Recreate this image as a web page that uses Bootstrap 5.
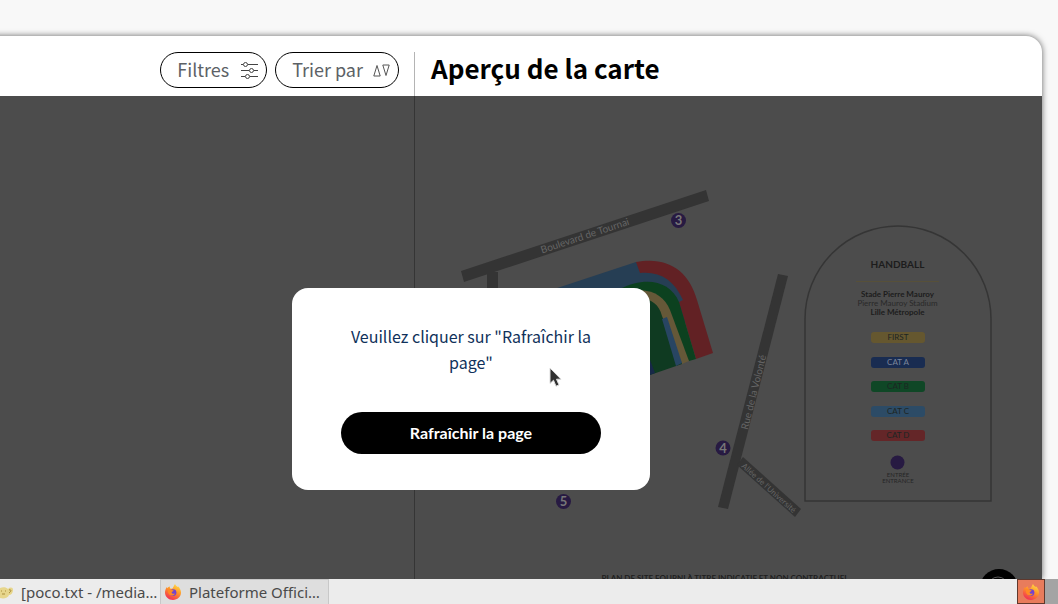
<!DOCTYPE html>
<html lang="fr">
<head>
<meta charset="utf-8">
<meta name="viewport" content="width=device-width, initial-scale=1">
<title>Aperçu de la carte</title>
<link href="https://cdn.jsdelivr.net/npm/bootstrap@5.3.0/dist/css/bootstrap.min.css" rel="stylesheet">
<style>
  body { background: #f8f8f8; font-family: "Noto Sans CJK SC", "Open Sans", sans-serif; }
  .desk { padding: 36px 16px 0 0; }
  .site-window { background: #fff; border-radius: 0 16px 0 0; box-shadow: 0 0 6px rgba(0,0,0,.6); margin-left: -16px; padding-left: 16px; }
  .site-head { padding-top: 16px; height: 60px; }
  .side-col { flex: 0 0 415px; border-right: 1px solid #b4b4b4; }
  .side-tools { padding-right: 15px; }
  .stage .side-col { border-color: #353535; }
  .stage { background: #4c4c4c; }
  .pill { height: 36px; border: 1px solid #000; border-radius: 18px; background: #fff; color: #5c6166; font-size: 18px; line-height: 20px; padding: 0 8px 0 16px; gap: 12px; }
  .pill-sort { gap: 10px; }
  .pill span { padding-bottom: 2px; }
  .map-title { font-size: 26px; line-height: 32px; font-weight: 700; color: #000; }
  .plan { width: 100%; height: 100%; }
  .plan text { font-family: Lato, sans-serif; text-anchor: middle; }
  .veil { padding: 252px 84px 0 0; }
  .dialog-box { width: 358px; background: #fff; border-radius: 16px; padding: 35px 49px 36px; gap: 37px; }
  .dialog-text { color: #10315a; font-size: 16px; line-height: 26px; }
  .btn-refresh { height: 42px; border-radius: 21px; background: #000; color: #fff; border: 0; font: 700 16px/20px Lato, sans-serif; }
  .pointer { left: 257px; top: 78px; }
  .taskbar { height: 25px; background: #ececec; color: #4a4a4a; font-family: "Noto Sans", sans-serif; position: relative; }
  .task { border: 0; background: none; color: inherit; padding: 0 0 0 4px; gap: 8px; font-size: 15px; line-height: 20px; white-space: nowrap; }
  .task-one { width: 160px; padding-left: 0; }
  .task-two { width: 169px; background: #dedede; border: 1px solid #c8c8c8; border-bottom: 0; }
  .tray-app { width: 28px; border: 1px solid #60382c; background: #e87c5c; padding: 0; }
  .tray-end { width: 13px; background: #a4a4a4; }
</style>
<script src="https://cdn.jsdelivr.net/npm/bootstrap@5.3.0/dist/js/bootstrap.bundle.min.js"></script>
</head>
<body class="vh-100 d-flex flex-column overflow-hidden">
<svg width="0" height="0" class="position-absolute" aria-hidden="true">
  <defs>
    <linearGradient id="flame" x1=".8" y1="0" x2=".3" y2="1"><stop offset="0" stop-color="#ffe14a"/><stop offset=".45" stop-color="#ff9427"/><stop offset="1" stop-color="#f02c58"/></linearGradient>
    <symbol id="fox" viewBox="0 0 16 16">
      <path fill="url(#flame)" d="M10 0c.6 1.500 1.600 2 2.400 3 .3-.2.500-.5.500-.8C14.800 3.800 16 6.200 16 8.600 16 12.800 12.400 16 8 16S0 12.800 0 8.500C0 6.300.8 4.300 2 3c0 .5.100 1 .3 1.200C3 3.400 4 2.700 5 2.500c-.3.700-.2 1.400.1 1.900l2 .4C8.500 3.600 8.800 1.500 10 0z"/>
      <circle cx="8" cy="8.600" r="3.400" fill="#7343cf"/>
      <path fill="#ff8a25" d="M3 5.500c1.500-.8 3-.5 4 .4l1.700.5c-.2.900-1.700 1-2 1.700-.2 1.600 1.600 2.300 3.200 1.300-.8 2.500-4.400 2.800-6 .6C3 8.800 2.500 7 3 5.500z"/>
    </symbol>
  </defs>
</svg>
<div class="desk flex-grow-1 d-flex overflow-hidden">
  <main class="site-window flex-grow-1 d-flex flex-column position-relative">
    <header class="site-head d-flex flex-shrink-0">
      <div class="side-col side-tools d-flex justify-content-end gap-2">
        <button class="pill d-flex align-items-center" type="button"><span>Filtres</span>
          <svg width="17" height="17" viewBox="0 0 17 17" fill="none" stroke="#444"><path d="M0 2.500h2m5 0h10M0 8.500h8m5 0h4M0 14.500h4m5 0h8"/><circle cx="4.500" cy="2.500" r="2"/><circle cx="10.500" cy="8.500" r="2"/><circle cx="6.500" cy="14.500" r="2"/></svg>
        </button>
        <button class="pill pill-sort d-flex align-items-center" type="button"><span>Trier par</span>
          <svg width="17" height="13" viewBox="0 0 17 13" fill="none" stroke="#555"><path d="M.8 12 4 1.500 7.200 12zM9.800 1h6.400L13 11.500z"/></svg>
        </button>
      </div>
      <h1 class="map-title mb-0 ps-3">Aperçu de la carte</h1>
    </header>
    <div class="stage d-flex flex-grow-1 overflow-hidden">
      <div class="side-col"></div>
      <div class="flex-grow-1 overflow-hidden">
        <svg class="plan d-block" viewBox="415 96 627 483" preserveAspectRatio="xMinYMin slice" role="img" aria-label="Plan du stade">
          <g fill="#343434">
            <path d="M461 271 706 190 709 201 464 282z"/>
            <path d="M487 272h11v110h-11z"/>
            <path d="M778 274 788 276 728 509 718 507z"/>
            <path d="M743 457 801 509 795 517 737 465z"/>
          </g>
          <g fill="#666" font-size="10">
            <text transform="translate(586 239) rotate(-18.300)">Boulevard de Tournai</text>
            <text transform="translate(757 393) rotate(-76)">Rue de la Volonté</text>
            <text transform="translate(767 490) rotate(42)" font-size="8">Allée de l'Université</text>
          </g>
          <path fill="#263e54" d="M530 297 636 262 690 290 684 330 650 340 560 340z"/>
          <path fill="#622124" d="M636 262C668 256 689 271 697 300L713 353 696 359 679 302 683 300C674 280 660 271 640 273z"/>
          <path fill="#0c411f" d="M620 289C646 276 670 281 679 302L696 359 689 361 650 330z"/>
          <path fill="#655838" d="M640 290C656 291 665 298 670 310L689 361 682 364 650 330z"/>
          <path fill="#0f3a21" d="M640 297C652 300 659 304 662 316L682 364 650 375z"/>
          <path fill="#284562" d="M662 319 667 317 682 363 676 366z"/>
          <path fill="#172848" d="M650 360 655 373 650 375z"/>
          <g fill="#271a42"><circle cx="678.500" cy="220.500" r="7.500"/><circle cx="723" cy="448" r="7.500"/><circle cx="563.500" cy="501.500" r="7.500"/><circle cx="897.500" cy="462.500" r="7"/></g>
          <g fill="#777" font-size="13" font-weight="700"><text x="678.500" y="225">3</text><text x="723" y="453">4</text><text x="563.500" y="506">5</text></g>
          <path d="M805 501V319a93 93 0 0 1 186 0V501z" fill="none" stroke="#353535" stroke-width="1.500"/>
          <path d="M856 281.500h83" stroke="#575039" stroke-width="1"/>
          <g fill="#1c1c1c">
            <text x="897.500" y="268" font-size="10" font-weight="700">HANDBALL</text>
            <g font-size="8"><text x="897.500" y="297" font-weight="700">Stade Pierre Mauroy</text><text x="897.500" y="306" fill="#292929">Pierre Mauroy Stadium</text><text x="897.500" y="315" font-weight="700">Lille Métropole</text></g>
          </g>
          <rect x="871" y="332" width="54" height="11" rx="3" fill="#65572f"/>
          <rect x="871" y="357" width="54" height="11" rx="3" fill="#192c51"/>
          <rect x="871" y="381" width="54" height="11" rx="3" fill="#0f4726"/>
          <rect x="871" y="406" width="54" height="11" rx="3" fill="#2c4b66"/>
          <rect x="871" y="430" width="54" height="11" rx="3" fill="#642628"/>
          <g fill="#1d2523" font-size="8"><text x="898" y="340">FIRST</text><text x="898" y="365" fill="#7b869c">CAT A</text><text x="898" y="389">CAT B</text><text x="898" y="414">CAT C</text><text x="898" y="438">CAT D</text></g>
          <g fill="#262626" font-size="6"><text x="898" y="477">ENTRÉE</text><text x="898" y="483">ENTRANCE</text></g>
          <text x="725" y="581" fill="#202020" font-size="8" font-weight="700">PLAN DE SITE FOURNI À TITRE INDICATIF ET NON CONTRACTUEL</text>
          <circle cx="999" cy="588" r="19" fill="#000"/><circle cx="998" cy="587" r="10" fill="none" stroke="#555"/>
        </svg>
      </div>
    </div>
    <div class="veil position-absolute top-0 start-0 w-100">
      <section class="dialog-box d-flex flex-column mx-auto position-relative" role="dialog" aria-label="Rafraîchir">
        <p class="dialog-text text-center mb-0">Veuillez cliquer sur "Rafraîchir la page"</p>
        <button class="btn-refresh" type="button">Rafraîchir la page</button>
        <svg class="pointer position-absolute" width="15" height="22" viewBox="0 0 15 22" aria-hidden="true"><path d="M1 2v15.500l3.500-3.300 2.500 6 3-1.300-2.500-5.700H12z" fill="#303030" stroke="#ddd" stroke-width="1"/></svg>
      </section>
    </div>
  </main>
</div>
<footer class="taskbar d-flex flex-shrink-0">
  <button class="task task-one d-flex align-items-center" type="button">
    <svg width="13" height="16" viewBox="0 0 13 16"><path d="M0 4c3-1 6-1 8 1 2-2 5-2 5 1 0 3-2 5-4 5-1 3-5 4-9 3z" fill="#e7d68c"/><path d="M9 6c2-1 3 1 0 3M1 7h1m3 0h1M2 10h3" stroke="#aa8d3c" fill="none"/></svg>
    [poco.txt - /media…
  </button>
  <button class="task task-two d-flex align-items-center" type="button">
    <svg width="16" height="16"><use href="#fox"/></svg>
    Plateforme Offici…
  </button>
  <button class="tray-app d-flex align-items-center justify-content-center ms-auto" type="button" aria-label="Firefox"><svg width="16" height="16"><use href="#fox"/></svg></button>
  <div class="tray-end"></div>
</footer>
</body>
</html>
